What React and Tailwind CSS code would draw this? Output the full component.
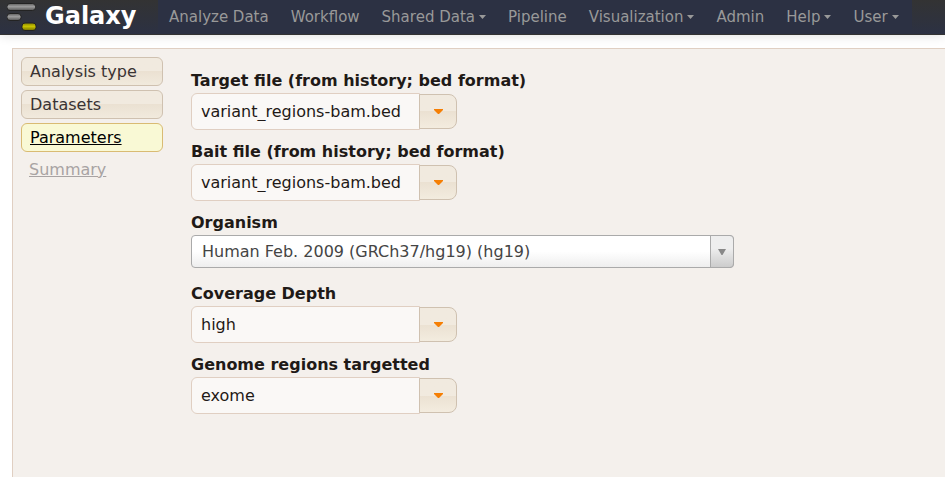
import React, { useState } from "react";

const navItems = [
  { label: "Analyze Data" },
  { label: "Workflow" },
  { label: "Shared Data", menu: true },
  { label: "Pipeline" },
  { label: "Visualization", menu: true },
  { label: "Admin" },
  { label: "Help", menu: true },
  { label: "User", menu: true },
];

function Logo() {
  return (
    <svg width="30" height="32" viewBox="0 0 30 32" aria-hidden="true">
      <defs>
        <linearGradient id="bar-grey" x1="0" y1="0" x2="0" y2="1">
          <stop offset="0" stopColor="#5f5f5f" />
          <stop offset="0.45" stopColor="#9c9c9c" />
          <stop offset="1" stopColor="#555555" />
        </linearGradient>
        <linearGradient id="bar-gold" x1="0" y1="0" x2="0" y2="1">
          <stop offset="0" stopColor="#858200" />
          <stop offset="0.45" stopColor="#c9c400" />
          <stop offset="1" stopColor="#757100" />
        </linearGradient>
      </defs>
      <g stroke="#232323" strokeWidth="1">
        <rect x="0" y="3.5" width="28.5" height="7" rx="3" fill="url(#bar-grey)" />
        <rect x="0" y="13.5" width="14" height="7" rx="3" fill="url(#bar-grey)" />
        <rect x="15" y="23" width="14" height="7.5" rx="3" fill="url(#bar-gold)" />
      </g>
    </svg>
  );
}

function NavBar() {
  return (
    <header className="flex h-[35px] items-stretch border-b border-[#333333] bg-linear-to-b from-[#333333] to-[#2c3143] shadow-[0_1px_10px_rgba(0,0,0,0.12)]">
      <a href="#home" className="flex w-[158px] shrink-0 items-center gap-2 pb-0.5 pl-[7px] text-2xl leading-8 font-bold text-white">
        <Logo />
        Galaxy
      </a>
      <nav className="flex bg-[#2c3143] pr-0.5 text-[15px] text-[#999999]">
        {navItems.map((item) => (
          <a key={item.label} href="#nav" className="flex items-center gap-1 px-[11px] pb-px leading-5 whitespace-nowrap">
            {item.label}
            {item.menu && (
              <svg width="7" height="4" viewBox="0 0 7 4" fill="currentColor" aria-hidden="true">
                <path d="M0 0h7L3.5 4z" />
              </svg>
            )}
          </a>
        ))}
      </nav>
    </header>
  );
}

const tabBase = "block h-[29px] rounded-md border px-2 leading-[27px]";
const tabIdle = "border-[#cfc1b0] bg-linear-to-b from-[#f1eadf] from-50% via-[#ebe1d2] via-50% to-[#f1eadd] text-[#3a3333]";

function Sidebar() {
  return (
    <nav className="flex w-[142px] shrink-0 flex-col gap-1" aria-label="Steps">
      <a href="#analysis" className={`${tabBase} ${tabIdle}`}>Analysis type</a>
      <a href="#datasets" className={`${tabBase} ${tabIdle}`}>Datasets</a>
      <a href="#parameters" className={`${tabBase} border-[#d9bb73] bg-[#f9f9d5] text-black underline`}>Parameters</a>
      <a href="#summary" className="px-2 leading-7 text-[#a8a3a3] underline">Summary</a>
    </nav>
  );
}

function Field({ id, label, children }) {
  return (
    <div>
      <label htmlFor={id} className="block h-[23px] leading-[22px] font-bold text-[#1f1a17]">{label}</label>
      <div className="min-h-[37px]">{children}</div>
    </div>
  );
}

function Combo({ id, label, initial }) {
  const [value, setValue] = useState(initial);
  return (
    <Field id={id} label={label}>
      <div className="flex items-center">
        <input
          id={id}
          value={value}
          onChange={(e) => setValue(e.target.value)}
          className="h-[37px] w-[229px] rounded-l-md border border-[#e0cfc2] bg-[#faf8f6] px-[9px] text-[#1f1a17] outline-none"
        />
        <button
          type="button"
          aria-label={`Show choices for ${label}`}
          className="-ml-px flex h-[35px] w-[38px] items-center justify-center rounded-r-lg border border-[#cfc1b0] bg-linear-to-b from-[#f1eadf] from-50% via-[#ebe1d2] via-50% to-[#f3ecdf]"
        >
          <svg width="9" height="5" viewBox="0 0 9 5" fill="#f57f05" aria-hidden="true">
            <path d="M0 0h9v1L5 5H4L0 1z" />
          </svg>
        </button>
      </div>
    </Field>
  );
}

export default function App() {
  return (
    <div className="flex min-h-screen flex-col bg-white font-['DejaVu_Sans',sans-serif] text-base">
      <NavBar />
      <main className="mt-[13px] ml-3 flex flex-1 gap-7 border-t border-l border-[#e0cfc2] bg-[#f4f0ec] pt-2 pl-2">
        <Sidebar />
        <form className="flex min-w-0 flex-1 flex-col gap-[11px] pt-[13px] pr-4">
          <Combo id="target" label="Target file (from history; bed format)" initial="variant_regions-bam.bed" />
          <Combo id="bait" label="Bait file (from history; bed format)" initial="variant_regions-bam.bed" />
          <Field id="organism" label="Organism">
            <div className="relative max-w-[543px]">
              <select
                id="organism"
                className="block h-[33px] w-full appearance-none rounded border border-[#aaaaaa] bg-linear-to-b from-white from-50% to-[#eeeeee] pr-8 pl-[10px] text-[#444444] outline-none"
              >
                <option>Human Feb. 2009 (GRCh37/hg19) (hg19)</option>
              </select>
              <span className="pointer-events-none absolute inset-y-0 right-0 flex w-6 items-center justify-center rounded-r border border-[#aaaaaa] bg-linear-to-b from-[#eeeeee] from-40% to-[#cccccc]">
                <svg width="8" height="6" viewBox="0 0 8 6" fill="#888888" aria-hidden="true">
                  <path d="M0 0h8L4.5 6h-1z" />
                </svg>
              </span>
            </div>
          </Field>
          <Combo id="coverage" label="Coverage Depth" initial="high" />
          <Combo id="regions" label="Genome regions targetted" initial="exome" />
        </form>
      </main>
    </div>
  );
}
